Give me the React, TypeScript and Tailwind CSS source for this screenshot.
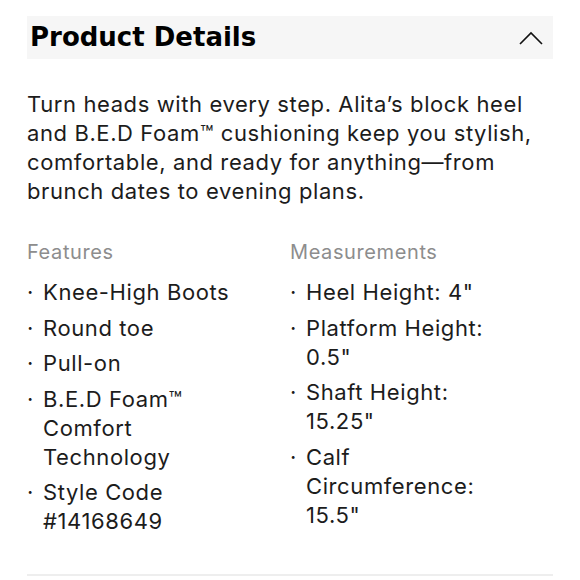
import React from 'react';

const features = ['Knee-High Boots', 'Round toe', 'Pull-on', 'B.E.D Foam™ Comfort Technology', 'Style Code #14168649'];
const measurements = ['Heel Height: 4"', 'Platform Height: 0.5"', 'Shaft Height: 15.25"', 'Calf Circumference: 15.5"'];

const DetailList: React.FC<{ title: string; items: string[] }> = ({ title, items }) => (
  <div>
    <div className="text-[20px] leading-[24px] tracking-[0.6px] text-[#8d8d8d]">{title}</div>
    <ul className="mt-[14px] flex flex-col gap-[6.5px]">
      {items.map((item) => (
        <li key={item} className="flex text-[22px] leading-[29px] tracking-[0.6px] text-[#1c1c1c]">
          <span className="w-[16px] shrink-0">·</span>
          <span className="w-[205px]">{item}</span>
        </li>
      ))}
    </ul>
  </div>
);

export default function App() {
  return (
    <div className="min-h-[580px] bg-white px-[27px] pt-[16px] font-['Inter',sans-serif]">
      <div className="flex h-[43px] items-center justify-between bg-[#f6f6f6] pl-[3px] pr-[10px]">
        <h2 className="font-['DejaVu_Sans',sans-serif] text-[26px] font-bold text-black">Product Details</h2>
        <svg width="24" height="14" viewBox="0 0 24 14" fill="none" stroke="#111" strokeWidth="1.6">
          <path d="M1 13 L12 2 L23 13" />
        </svg>
      </div>
      <p className="mt-[31px] text-[22px] leading-[29px] tracking-[0.6px] text-[#1c1c1c]">
        Turn heads with every step. Alita’s block heel and B.E.D Foam™ cushioning keep you stylish, comfortable, and ready for anything—from brunch dates to evening plans.
      </p>
      <div className="mt-[34px] grid grid-cols-2">
        <DetailList title="Features" items={features} />
        <DetailList title="Measurements" items={measurements} />
      </div>
      <div className="mt-[38px] h-[2px] bg-[#eeeeee]" />
    </div>
  );
}
